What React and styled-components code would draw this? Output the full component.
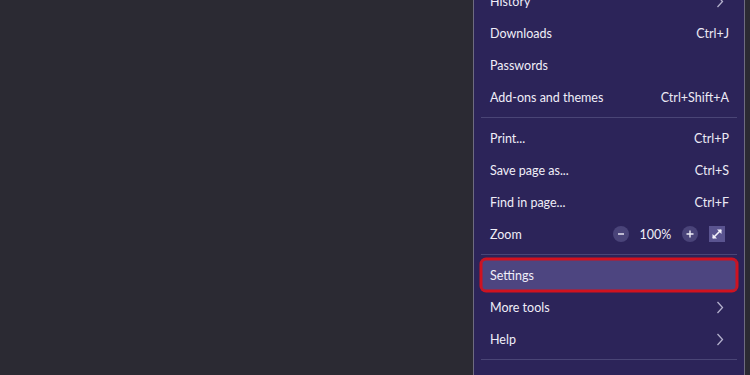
import React from "react";
import styled, { createGlobalStyle } from "styled-components";

const Global = createGlobalStyle`
  html, body { margin: 0; padding: 0; background: #2b2a33; }
  body { font-family: "Lato", "Noto Sans", sans-serif; }
`;

const Page = styled.div`
  display: flex;
  height: 375px;
  width: 750px;
  overflow: hidden;
  background: #2b2a33;
`;

const Spacer = styled.div`
  flex: 1;
`;

const Panel = styled.div`
  width: 270px;
  margin-right: 5px;
  margin-top: -15px;
  padding-bottom: 40px;
  background: #2c2459;
  border-left: 1px solid #6e6b80;
  border-right: 1px solid #6e6b80;
  display: flex;
  flex-direction: column;
  align-self: flex-start;
`;

const Row = styled.div`
  height: 32px;
  margin: 0 7px;
  padding: 0 8px 0 9px;
  display: flex;
  align-items: center;
  justify-content: space-between;
  border-radius: 5px;
  color: #f0eef8;
  font-size: 12.5px;
  background: ${(p) => (p.$active ? "#4d4580" : "transparent")};
  box-shadow: ${(p) =>
    p.$active ? "0 0 0 1.5px #d1121f, inset 0 0 0 1.5px #d1121f" : "none"};
`;

const Label = styled.span``;

const Shortcut = styled.span`
  color: #eceaf5;
`;

const Separator = styled.div`
  height: 1px;
  margin: 4px 7px;
  background: #4a4576;
`;

const Controls = styled.div`
  display: flex;
  align-items: center;
  margin-right: 4px;
`;

const RoundBtn = styled.span`
  width: 16px;
  height: 16px;
  border-radius: 50%;
  background: #4a4479;
  display: flex;
  align-items: center;
  justify-content: center;
`;

const Percent = styled.span`
  width: 53px;
  text-align: center;
  font-size: 12.5px;
`;

const SquareBtn = styled.span`
  width: 16px;
  height: 16px;
  margin-left: 11px;
  background: #5a5490;
  display: flex;
  align-items: center;
  justify-content: center;
`;

const Chevron = () => (
  <svg width="8" height="13" viewBox="0 0 8 13" style={{ marginRight: 5 }}>
    <path d="M1.5 1 L6.5 6.5 L1.5 12" fill="none" stroke="#b3b0cc" strokeWidth="1.3" />
  </svg>
);

const Minus = () => (
  <svg width="10" height="10" viewBox="0 0 10 10">
    <path d="M2 5 H8" stroke="#f0eef8" strokeWidth="1.4" />
  </svg>
);

const Plus = () => (
  <svg width="10" height="10" viewBox="0 0 10 10">
    <path d="M1.5 5 H8.5 M5 1.5 V8.5" stroke="#f0eef8" strokeWidth="1.4" />
  </svg>
);

const Expand = () => (
  <svg width="14" height="14" viewBox="0 0 14 14">
    <path d="M3 11 L11 3" stroke="#f4f2fb" strokeWidth="1.6" />
    <path d="M7 2.5 H11.5 V7 Z" fill="#f4f2fb" />
    <path d="M2.5 7 V11.5 H7 Z" fill="#f4f2fb" />
  </svg>
);

export default function App() {
  return (
    <>
      <Global />
      <Page>
        <Spacer />
        <Panel>
          <Row>
            <Label>History</Label>
            <Chevron />
          </Row>
          <Row>
            <Label>Downloads</Label>
            <Shortcut>Ctrl+J</Shortcut>
          </Row>
          <Row>
            <Label>Passwords</Label>
          </Row>
          <Row>
            <Label>Add-ons and themes</Label>
            <Shortcut>Ctrl+Shift+A</Shortcut>
          </Row>
          <Separator />
          <Row>
            <Label>Print...</Label>
            <Shortcut>Ctrl+P</Shortcut>
          </Row>
          <Row>
            <Label>Save page as...</Label>
            <Shortcut>Ctrl+S</Shortcut>
          </Row>
          <Row>
            <Label>Find in page...</Label>
            <Shortcut>Ctrl+F</Shortcut>
          </Row>
          <Row>
            <Label>Zoom</Label>
            <Controls>
              <RoundBtn><Minus /></RoundBtn>
              <Percent>100%</Percent>
              <RoundBtn><Plus /></RoundBtn>
              <SquareBtn><Expand /></SquareBtn>
            </Controls>
          </Row>
          <Separator />
          <Row $active>
            <Label>Settings</Label>
          </Row>
          <Row>
            <Label>More tools</Label>
            <Chevron />
          </Row>
          <Row>
            <Label>Help</Label>
            <Chevron />
          </Row>
          <Separator />
        </Panel>
      </Page>
    </>
  );
}
